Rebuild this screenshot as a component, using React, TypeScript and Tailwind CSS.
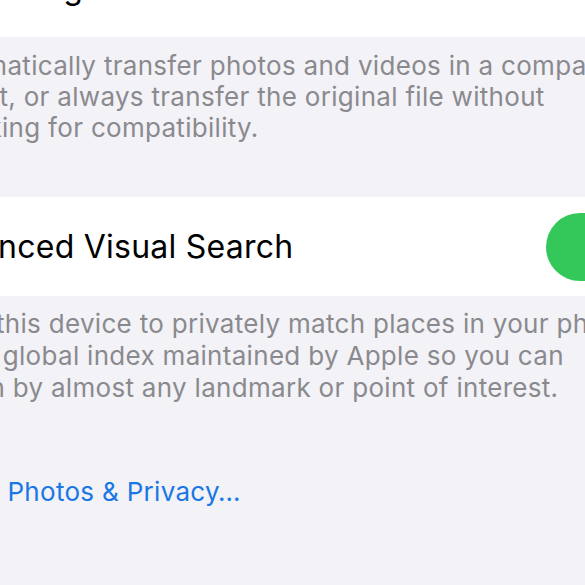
export default function App() {
  return (
    <div className="w-[585px] h-[585px] overflow-hidden bg-[#f2f2f7] font-['Inter',sans-serif]">
      <div className="h-[37px] bg-white overflow-hidden">
        <div className="-ml-[70px] -mt-[31px] text-[32px] tracking-[0.3px] leading-[38px] text-black whitespace-nowrap">
          Keep Originals
        </div>
      </div>

      <div className="pt-[13px] pb-[54px] -ml-[74px] text-[26px] tracking-[0.3px] leading-[31px] text-[#8a8a8e] whitespace-nowrap">
        <div>Automatically transfer photos and videos in a compatible</div>
        <div>format, or always transfer the original file without</div>
        <div>checking for compatibility.</div>
      </div>

      <div className="h-[99px] bg-white flex items-center justify-between">
        <div className="-ml-[78px] text-[32px] tracking-[0.25px] text-black whitespace-nowrap">
          Enhanced Visual Search
        </div>
        <div className="w-[112px] h-[68px] rounded-full bg-[#34c759] -mr-[73px] shrink-0" />
      </div>

      <div className="pt-[12px] -ml-[80px] text-[26px] tracking-[0.3px] leading-[32px] text-[#8a8a8e] whitespace-nowrap">
        <div>Allow this device to privately match places in your photos</div>
        <div>with a global index maintained by Apple so you can</div>
        <div>search by almost any landmark or point of interest.</div>
      </div>

      <div className="mt-[72px] -ml-[75px] text-[26px] tracking-[0.3px] leading-[31px] text-[#1a77e4] whitespace-nowrap">
        About Photos &amp; Privacy…
      </div>
    </div>
  );
}
